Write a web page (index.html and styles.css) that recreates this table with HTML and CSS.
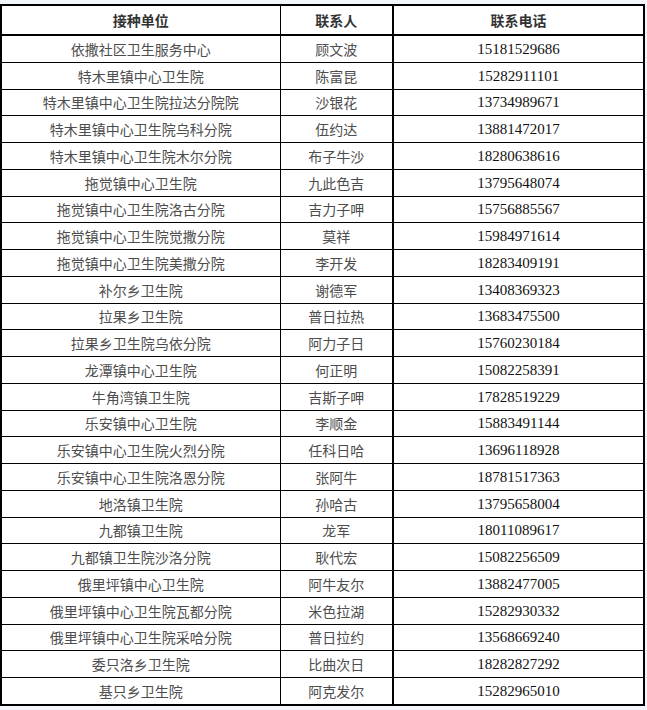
FILE: index.html
```html
<!DOCTYPE html>
<html lang="zh-CN">
<head>
<meta charset="utf-8">
<title>接种单位联系表</title>
<link rel="stylesheet" href="styles.css">
</head>
<body>
<table class="contacts">
  <colgroup>
    <col class="c-unit">
    <col class="c-person">
    <col class="c-phone">
  </colgroup>
  <thead>
    <tr><th>接种单位</th><th class="col2">联系人</th><th>联系电话</th></tr>
  </thead>
  <tbody>
    <tr><td>依撒社区卫生服务中心</td><td class="col2">顾文波</td><td class="num">15181529686</td></tr>
    <tr><td>特木里镇中心卫生院</td><td class="col2">陈富昆</td><td class="num">15282911101</td></tr>
    <tr><td>特木里镇中心卫生院拉达分院院</td><td class="col2">沙银花</td><td class="num">13734989671</td></tr>
    <tr><td>特木里镇中心卫生院乌科分院</td><td class="col2">伍约达</td><td class="num">13881472017</td></tr>
    <tr><td>特木里镇中心卫生院木尔分院</td><td class="col2">布子牛沙</td><td class="num">18280638616</td></tr>
    <tr><td>拖觉镇中心卫生院</td><td class="col2">九此色吉</td><td class="num">13795648074</td></tr>
    <tr><td>拖觉镇中心卫生院洛古分院</td><td class="col2">吉力子呷</td><td class="num">15756885567</td></tr>
    <tr><td>拖觉镇中心卫生院觉撒分院</td><td class="col2">莫祥</td><td class="num">15984971614</td></tr>
    <tr><td>拖觉镇中心卫生院美撒分院</td><td class="col2">李开发</td><td class="num">18283409191</td></tr>
    <tr><td>补尔乡卫生院</td><td class="col2">谢德军</td><td class="num">13408369323</td></tr>
    <tr><td>拉果乡卫生院</td><td class="col2">普日拉热</td><td class="num">13683475500</td></tr>
    <tr><td>拉果乡卫生院乌依分院</td><td class="col2">阿力子日</td><td class="num">15760230184</td></tr>
    <tr><td>龙潭镇中心卫生院</td><td class="col2">何正明</td><td class="num">15082258391</td></tr>
    <tr><td>牛角湾镇卫生院</td><td class="col2">吉斯子呷</td><td class="num">17828519229</td></tr>
    <tr><td>乐安镇中心卫生院</td><td class="col2">李顺金</td><td class="num">15883491144</td></tr>
    <tr><td>乐安镇中心卫生院火烈分院</td><td class="col2">任科日哈</td><td class="num">13696118928</td></tr>
    <tr><td>乐安镇中心卫生院洛恩分院</td><td class="col2">张阿牛</td><td class="num">18781517363</td></tr>
    <tr><td>地洛镇卫生院</td><td class="col2">孙哈古</td><td class="num">13795658004</td></tr>
    <tr><td>九都镇卫生院</td><td class="col2">龙军</td><td class="num">18011089617</td></tr>
    <tr><td>九都镇卫生院沙洛分院</td><td class="col2">耿代宏</td><td class="num">15082256509</td></tr>
    <tr><td>俄里坪镇中心卫生院</td><td class="col2">阿牛友尔</td><td class="num">13882477005</td></tr>
    <tr><td>俄里坪镇中心卫生院瓦都分院</td><td class="col2">米色拉湖</td><td class="num">15282930332</td></tr>
    <tr><td>俄里坪镇中心卫生院采哈分院</td><td class="col2">普日拉约</td><td class="num">13568669240</td></tr>
    <tr><td>委只洛乡卫生院</td><td class="col2">比曲次日</td><td class="num">18282827292</td></tr>
    <tr><td>基只乡卫生院</td><td class="col2">阿克发尔</td><td class="num">15282965010</td></tr>
  </tbody>
</table>
</body>
</html>
```

FILE: styles.css
```css
html, body {
  margin: 0;
  padding: 0;
  background: #f3f7fd;
}
body {
  padding: 4px 4px 4px 0;
}
.contacts {
  border-collapse: collapse;
  width: 643px;
  background: #ffffff;
  border: 2px solid #000;
  font-family: "Noto Sans CJK SC", "Microsoft YaHei", sans-serif;
  font-size: 14px;
  color: #4d4d4d;
  table-layout: fixed;
}
.c-unit { width: 279px; }
.c-person { width: 113px; }
.c-phone { width: 251px; }
.contacts th,
.contacts td {
  border: 1px solid #000;
  padding: 0;
  text-align: center;
  vertical-align: middle;
  line-height: 18px;
  white-space: nowrap;
}
.contacts th {
  height: 28px;
  font-weight: bold;
  color: #333;
  border-bottom: 2px solid #000;
}
.contacts td {
  height: 25.76px;
}
.contacts .col2 {
  border-right: 2px solid #000;
}
.contacts td.num {
  font-family: "Liberation Serif", "Times New Roman", serif;
  font-size: 15px;
  color: #111;
}
```
